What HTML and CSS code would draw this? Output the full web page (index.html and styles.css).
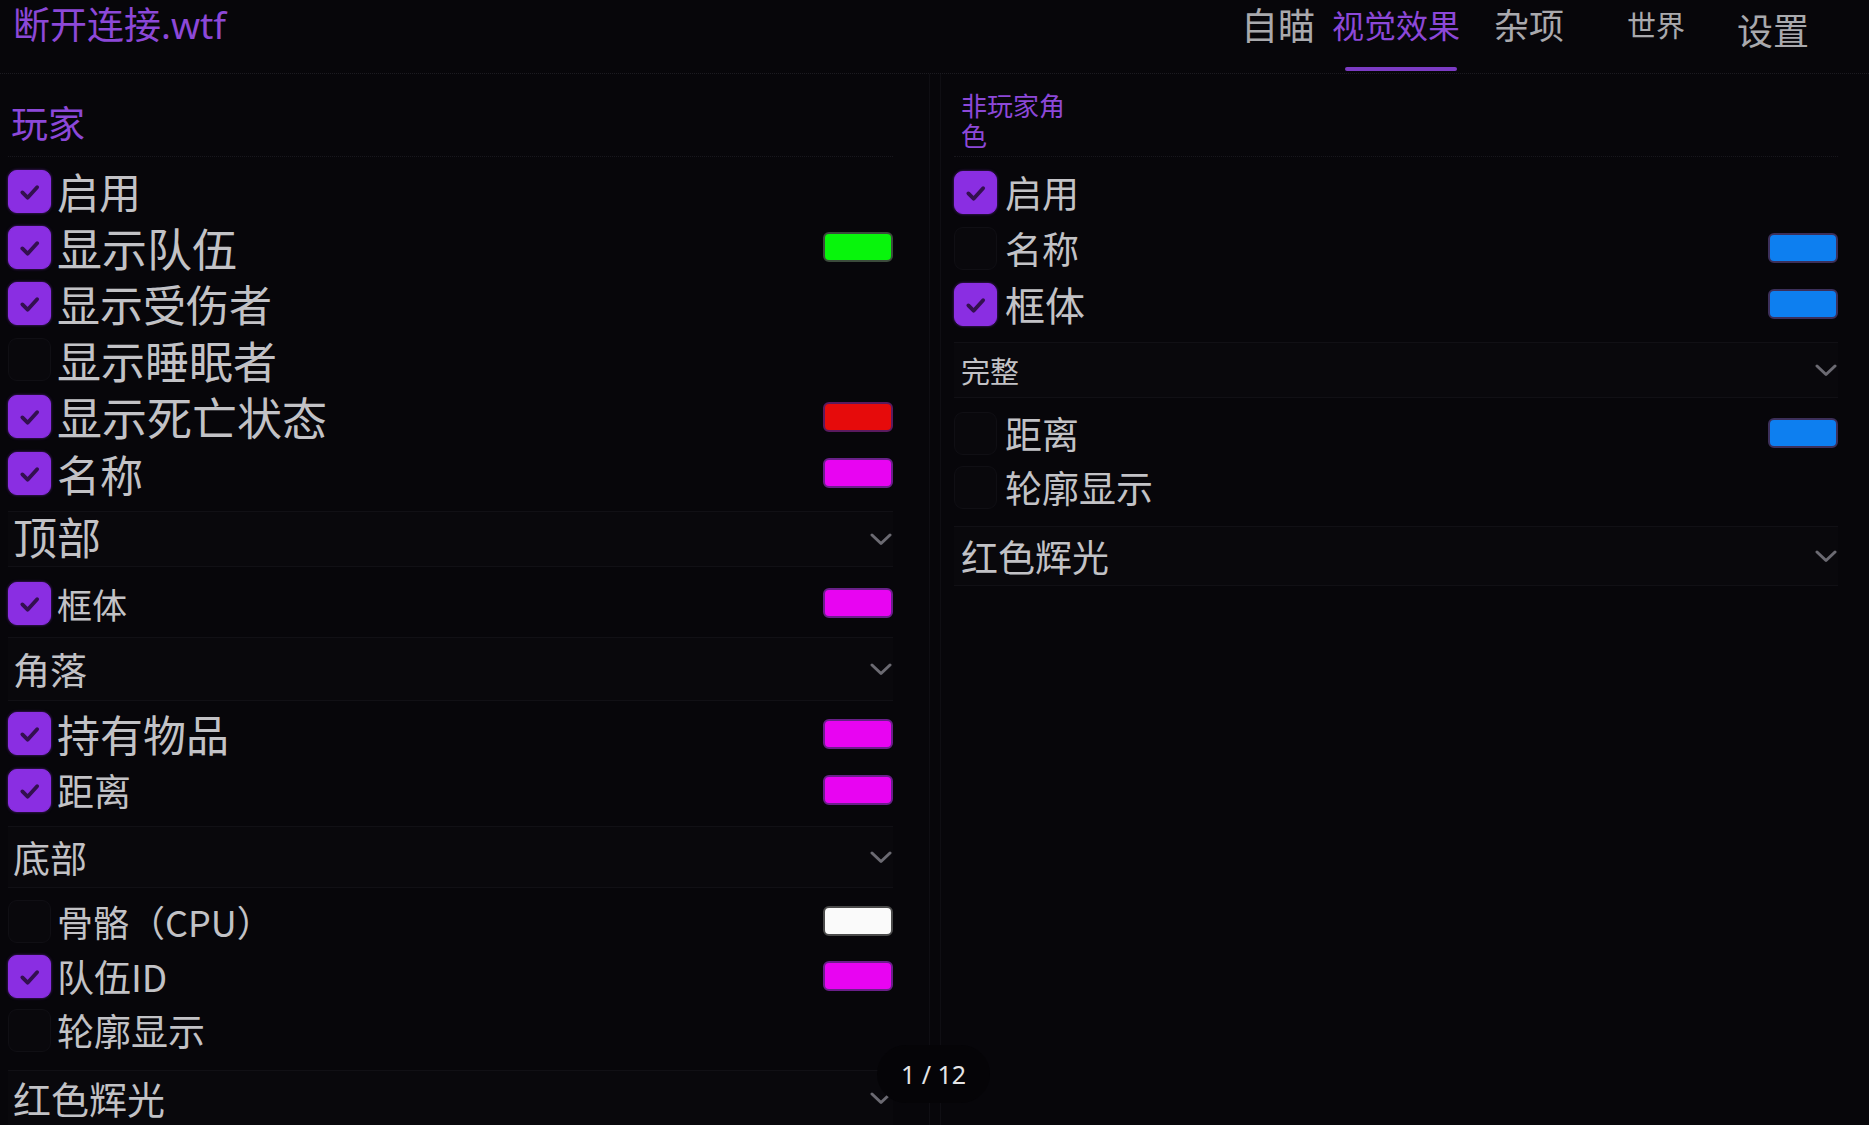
FILE: index.html
```html
<!DOCTYPE html>
<html lang="zh">
<head>
<meta charset="utf-8">
<title>断开连接.wtf</title>
<link rel="stylesheet" href="styles.css">
</head>
<body>
<div class="app">
  <header class="topbar">
    <div class="brand">断开连接.wtf</div>
    <nav class="tabs">
      <div class="tab tab-aim">自瞄</div>
      <div class="tab tab-visual active"><span>视觉效果</span><span class="tab-bar"></span></div>
      <div class="tab tab-misc">杂项</div>
      <div class="tab tab-world">世界</div>
      <div class="tab tab-settings">设置</div>
    </nav>
  </header>

  <main class="panels">
    <section class="panel panel-left">
      <div class="panel-head"><span class="panel-title title-player">玩家</span></div>
      <div class="list mt-6">
        <div class="row h-56"><span class="cb on"><svg viewBox="0 0 43 43"><path d="M14 22.5 L19.5 28 L29.5 17"/></svg></span><span class="label fs-42">启用</span></div>
        <div class="row h-56"><span class="cb on"><svg viewBox="0 0 43 43"><path d="M14 22.5 L19.5 28 L29.5 17"/></svg></span><span class="label fs-45">显示队伍</span><span class="sw sw-green"></span></div>
        <div class="row h-56"><span class="cb on"><svg viewBox="0 0 43 43"><path d="M14 22.5 L19.5 28 L29.5 17"/></svg></span><span class="label fs-43">显示受伤者</span></div>
        <div class="row h-57"><span class="cb"></span><span class="label fs-44">显示睡眠者</span></div>
        <div class="row h-57"><span class="cb on"><svg viewBox="0 0 43 43"><path d="M14 22.5 L19.5 28 L29.5 17"/></svg></span><span class="label fs-45">显示死亡状态</span><span class="sw sw-red"></span></div>
        <div class="row h-56"><span class="cb on"><svg viewBox="0 0 43 43"><path d="M14 22.5 L19.5 28 L29.5 17"/></svg></span><span class="label fs-43">名称</span><span class="sw sw-magenta"></span></div>

        <div class="dd mt-10 h-56"><span class="dd-label fs-44 lift-4">顶部</span><svg class="chev" viewBox="0 0 22 13"><polyline points="2,2 11,10.5 20,2"/></svg></div>

        <div class="row mt-8 h-56"><span class="cb on"><svg viewBox="0 0 43 43"><path d="M14 22.5 L19.5 28 L29.5 17"/></svg></span><span class="label fs-35">框体</span><span class="sw sw-magenta"></span></div>

        <div class="dd mt-6 h-64"><span class="dd-label fs-37">角落</span><svg class="chev" viewBox="0 0 22 13"><polyline points="2,2 11,10.5 20,2"/></svg></div>

        <div class="row mt-4 h-57"><span class="cb on"><svg viewBox="0 0 43 43"><path d="M14 22.5 L19.5 28 L29.5 17"/></svg></span><span class="label fs-43">持有物品</span><span class="sw sw-magenta"></span></div>
        <div class="row h-56"><span class="cb on"><svg viewBox="0 0 43 43"><path d="M14 22.5 L19.5 28 L29.5 17"/></svg></span><span class="label fs-37">距离</span><span class="sw sw-magenta"></span></div>

        <div class="dd mt-8 h-62"><span class="dd-label fs-37">底部</span><svg class="chev" viewBox="0 0 22 13"><polyline points="2,2 11,10.5 20,2"/></svg></div>

        <div class="row mt-5 h-56"><span class="cb"></span><span class="label fs-36">骨骼（CPU）</span><span class="sw sw-white"></span></div>
        <div class="row h-54"><span class="cb on"><svg viewBox="0 0 43 43"><path d="M14 22.5 L19.5 28 L29.5 17"/></svg></span><span class="label fs-37">队伍ID</span><span class="sw sw-magenta"></span></div>
        <div class="row h-54"><span class="cb"></span><span class="label fs-37">轮廓显示</span></div>

        <div class="dd mt-13 h-56"><span class="dd-label fs-38">红色辉光</span><svg class="chev" viewBox="0 0 22 13"><polyline points="2,2 11,10.5 20,2"/></svg></div>
      </div>
    </section>

    <section class="panel panel-right">
      <div class="panel-head"><span class="panel-title title-npc">非玩家角色</span></div>
      <div class="list mt-7">
        <div class="row h-56"><span class="cb on"><svg viewBox="0 0 43 43"><path d="M14 22.5 L19.5 28 L29.5 17"/></svg></span><span class="label fs-37">启用</span></div>
        <div class="row h-56"><span class="cb"></span><span class="label fs-37">名称</span><span class="sw sw-blue"></span></div>
        <div class="row h-56"><span class="cb on"><svg viewBox="0 0 43 43"><path d="M14 22.5 L19.5 28 L29.5 17"/></svg></span><span class="label fs-40">框体</span><span class="sw sw-blue"></span></div>

        <div class="dd mt-10 h-56"><span class="dd-label fs-29">完整</span><svg class="chev" viewBox="0 0 22 13"><polyline points="2,2 11,10.5 20,2"/></svg></div>

        <div class="row mt-8 h-54"><span class="cb"></span><span class="label fs-37">距离</span><span class="sw sw-blue"></span></div>
        <div class="row h-54"><span class="cb"></span><span class="label fs-37">轮廓显示</span></div>

        <div class="dd mt-12 h-60"><span class="dd-label fs-37">红色辉光</span><svg class="chev" viewBox="0 0 22 13"><polyline points="2,2 11,10.5 20,2"/></svg></div>
      </div>
    </section>
  </main>

  <div class="pager">1 / 12</div>
</div>
</body>
</html>
```

FILE: styles.css
```css
html, body {
  margin: 0;
  padding: 0;
}

body {
  width: 1869px;
  height: 1125px;
  overflow: hidden;
  background: #07060a;
  color: #c2c2c6;
  font-family: "Noto Sans CJK SC", "Noto Sans", sans-serif;
}

.app {
  position: relative;
  width: 1869px;
  height: 1125px;
}

/* ---------- top bar ---------- */
.topbar {
  height: 74px;
  box-sizing: border-box;
  border-bottom: 1px dotted #1c1b21;
  display: flex;
  align-items: flex-start;
}

.brand {
  font-family: "Noto Sans", "Noto Sans CJK SC", sans-serif;
  font-size: 37px;
  line-height: 44px;
  color: #8c48d8;
  padding-left: 13px;
  padding-top: 3px;
}

.tabs {
  margin-left: auto;
  display: flex;
  align-items: flex-start;
  padding-right: 60px;
}

.tab {
  display: flex;
  flex-direction: column;
  line-height: 48px;
  color: #a9a9ad;
}

.tab-aim { font-size: 37px; }
.tab-visual { font-size: 32px; margin-left: 17px; color: #8c48d8; }
.tab-misc { font-size: 35px; margin-left: 34px; }
.tab-world { font-size: 29px; margin-left: 63px; }
.tab-settings { font-size: 36px; margin-left: 52px; padding-top: 5px; }

.tab-bar {
  display: block;
  width: 112px;
  height: 4px;
  margin-left: 13px;
  margin-top: 19px;
  border-radius: 2px;
  background: #7b3bc4;
}

/* ---------- panels ---------- */
.panels {
  display: grid;
  grid-template-columns: 930px 1fr;
  column-gap: 10px;
}

.panel {
  box-sizing: border-box;
}

.panel-left {
  padding: 0 36px 0 8px;
  border-right: 1px solid #0f0e13;
}

.panel-right {
  padding: 0 31px 0 13px;
  border-left: 1px solid #0f0e13;
}

.panel-head {
  height: 83px;
  box-sizing: border-box;
  border-bottom: 1px dotted #18171d;
}

.panel-title {
  display: block;
  color: #8c48d8;
}

.title-player {
  font-size: 37px;
  line-height: 40px;
  padding-top: 28px;
  padding-left: 3px;
}

.title-npc {
  font-size: 26px;
  line-height: 30px;
  width: 110px;
  padding-top: 16px;
  padding-left: 7px;
}

.list {
  display: flex;
  flex-direction: column;
}

.row {
  display: flex;
  align-items: center;
  box-sizing: border-box;
}

.cb {
  flex: none;
  width: 43px;
  height: 43px;
  box-sizing: border-box;
  border-radius: 9px;
  background: #09080c;
  border: 1px solid #100f14;
  display: flex;
  align-items: center;
  justify-content: center;
}

.cb.on {
  background: #8a2ee2;
  border-color: #8a2ee2;
  box-shadow: 0 0 3px rgba(138, 46, 226, 0.6);
}

.cb svg {
  width: 43px;
  height: 43px;
}

.cb svg path {
  fill: none;
  stroke: #33104f;
  stroke-width: 4;
  stroke-linecap: round;
  stroke-linejoin: round;
}

.label {
  line-height: 1;
  margin-left: 6px;
  white-space: nowrap;
}

.panel-right .label {
  margin-left: 8px;
}

.sw {
  flex: none;
  margin-left: auto;
  width: 70px;
  height: 30px;
  box-sizing: border-box;
  border-radius: 6px;
  border: 2px solid #3d3346;
}

.sw-green { background: #08f50c; border-color: #3b4a3b; }
.sw-red { background: #e60b0b; border-color: #5a1a5e; }
.sw-magenta { background: #e804f2; border-color: #6a1f8a; }
.sw-white { background: #fafafa; border-color: #4a4a4a; }
.sw-blue { background: #0d7ff0; border-color: #3c2f5a; }

.dd {
  display: flex;
  align-items: center;
  justify-content: space-between;
  box-sizing: border-box;
  background: #09080c;
  border-top: 1px solid #111015;
  border-bottom: 1px solid #111015;
  padding: 0 1px 0 5px;
}

.panel-right .dd {
  padding-left: 7px;
}

.dd-label {
  line-height: 1;
  white-space: nowrap;
}

.lift-4 {
  padding-bottom: 6px;
}

.chev {
  width: 22px;
  height: 13px;
  flex: none;
}

.chev polyline {
  fill: none;
  stroke: #6b6a72;
  stroke-width: 3;
  stroke-linecap: round;
  stroke-linejoin: round;
}

/* font sizes */
.fs-29 { font-size: 29px; }
.fs-35 { font-size: 35px; }
.fs-36 { font-size: 36px; }
.fs-37 { font-size: 37px; }
.fs-38 { font-size: 38px; }
.fs-40 { font-size: 40px; }
.fs-42 { font-size: 42px; }
.fs-43 { font-size: 43px; }
.fs-44 { font-size: 44px; }
.fs-45 { font-size: 45px; }

/* heights */
.h-54 { height: 54px; }
.h-56 { height: 56px; }
.h-57 { height: 57px; }
.h-60 { height: 60px; }
.h-62 { height: 62px; }
.h-64 { height: 64px; }

/* top margins */
.mt-4 { margin-top: 4px; }
.mt-5 { margin-top: 5px; }
.mt-6 { margin-top: 6px; }
.mt-7 { margin-top: 7px; }
.mt-8 { margin-top: 8px; }
.mt-10 { margin-top: 10px; }
.mt-12 { margin-top: 12px; }
.mt-13 { margin-top: 13px; }

/* pager overlay */
.pager {
  position: absolute;
  left: 877px;
  top: 1045px;
  width: 113px;
  height: 58px;
  border-radius: 29px;
  background: #050407;
  display: flex;
  align-items: center;
  justify-content: center;
  font-family: "Noto Sans", sans-serif;
  font-size: 25px;
  color: #e4e4e6;
}
```
